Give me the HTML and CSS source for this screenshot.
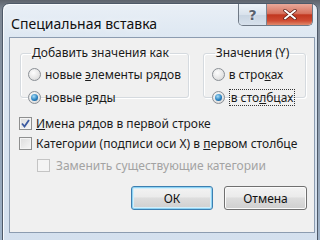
FILE: index.html
```html
<!DOCTYPE html>
<html lang="ru">
<head>
  <meta charset="UTF-8">
  <title>Специальная вставка</title>
  <link rel="stylesheet" href="styles.css">
</head>
<body>
  <div class="window">
    <div class="titlebar">
      <span class="title">Специальная вставка</span>
      <div class="caption-buttons">
        <span class="cap-btn cap-help">?</span>
        <span class="cap-btn cap-close">
          <svg width="14" height="11" viewBox="0 0 14 11">
            <path d="M2 1.5 L12 9.5 M12 1.5 L2 9.5" stroke="#5a1c14" stroke-width="3.4" stroke-linecap="round"/>
            <path d="M2 1.5 L12 9.5 M12 1.5 L2 9.5" stroke="#fff" stroke-width="2" stroke-linecap="round"/>
          </svg>
        </span>
      </div>
    </div>

    <div class="client">
      <div class="groups">
        <fieldset class="group group-add">
          <legend>Добавить значения как</legend>
          <label class="option"><span class="radio"></span><span>новые <u>э</u>лементы рядов</span></label>
          <label class="option"><span class="radio checked"></span><span>новые <u>р</u>яды</span></label>
        </fieldset>
        <fieldset class="group group-values">
          <legend>Значения (Y)</legend>
          <label class="option"><span class="radio"></span><span>в стро<u>к</u>ах</span></label>
          <label class="option"><span class="radio checked"></span><span class="focus">в сто<u>л</u>бцах</span></label>
        </fieldset>
      </div>

      <div class="checks">
        <label class="option"><span class="box checked">
          <svg width="9" height="9" viewBox="0 0 9 9"><path d="M1 4.5 L3.5 7.5 L8 1" fill="none" stroke="#3b5aa0" stroke-width="1.8"/></svg>
        </span><span><u>И</u>мена рядов в первой строке</span></label>
        <label class="option"><span class="box"></span><span>Категории (подписи оси X) в <u>п</u>ервом столбце</span></label>
        <label class="option sub disabled"><span class="box"></span><span>Заменить существующие категории</span></label>
      </div>

      <div class="buttons">
        <button class="btn default">ОК</button>
        <button class="btn">Отмена</button>
      </div>
    </div>
  </div>
</body>
</html>
```

FILE: styles.css
```css
body {
  margin: 0;
  width: 320px;
  height: 240px;
  overflow: hidden;
  background: linear-gradient(#5d636c, #7d8794 10px, #9fb3c9);
  font-family: "Noto Sans", "Open Sans", sans-serif;
  font-size: 12px;
  color: #1b1b1b;
}
.window {
  margin: 3px 2px 0 2px;
  height: 240px;
  border: 1px solid #4e5968;
  border-radius: 7px 7px 0 0;
  background: linear-gradient(#e9eff6, #dbe6f1 40px, #d4e0ee);
  padding: 0 2px 0 6px;
  box-shadow: inset 1px 1px 0 #f8fbfe;
}
.titlebar {
  height: 33px;
  display: flex;
  align-items: flex-start;
  justify-content: space-between;
}
.title {
  margin: 10px 0 0 2px;
  font-size: 14px;
  color: #111;
  text-shadow: 0 0 6px #fff;
}
.caption-buttons {
  display: flex;
  margin: 0 2px 0 0;
  height: 21px;
  border: 1px solid #6f7986;
  border-top: none;
  border-radius: 0 0 5px 5px;
  overflow: hidden;
}
.cap-btn {
  display: flex;
  align-items: center;
  justify-content: center;
  height: 21px;
}
.cap-help {
  width: 27px;
  border-right: 1px solid #7b8491;
  background: linear-gradient(#eef3f8, #d9e2ec 50%, #c8d4e1 51%, #d7e1ec);
  color: #59626e;
  font: bold 14px "DejaVu Sans", sans-serif;
  text-shadow: 0 0 2px #fff;
}
.cap-close {
  width: 45px;
  background: linear-gradient(#e9a99a, #d7735f 45%, #c1371f 52%, #cf4c33 80%, #e08a6d);
}
.client {
  height: 194px;
  border: 1px solid #8c9cb0;
  background: #f0f0f0;
  padding: 0;
}
.groups {
  display: flex;
  gap: 14px;
  padding: 8px 8px 0 10px;
}
.group {
  margin: 0;
  padding: 3px 0 0 7px;
  min-width: 0;
  height: 47px;
  border: 1px solid #d5dadf;
  border-radius: 3px;
  box-shadow: inset 1px 1px 0 #fff, 1px 1px 0 #fff;
}
.group legend {
  margin-left: 3px;
  padding: 0 1px;
  line-height: 14px;
}
.group-add {
  width: 161px;
}
.group-values {
  width: 94px;
  padding-left: 8px;
}
.option {
  display: flex;
  align-items: center;
  gap: 4px;
  height: 23px;
  white-space: nowrap;
}
.radio {
  width: 11px;
  height: 11px;
  border: 1px solid #8a8f95;
  border-radius: 50%;
  background: radial-gradient(circle at 40% 35%, #fdfdfd, #e4e4e4 60%, #cfcfcf);
  flex: none;
  display: flex;
  align-items: center;
  justify-content: center;
}
.radio.checked::after {
  content: "";
  width: 7px;
  height: 7px;
  border-radius: 50%;
  background: radial-gradient(circle at 40% 35%, #a8ddf6, #2b83c1 55%, #10467a);
}
.focus {
  border: 1px dotted #333;
  padding: 0 1px;
  line-height: 15px;
}
.checks {
  padding: 15px 0 0 9px;
}
.checks .option {
  height: 20px;
}
.box {
  width: 11px;
  height: 11px;
  border: 1px solid #8e8f8f;
  background: linear-gradient(135deg, #dcdcdc, #f6f6f6);
  box-shadow: inset 0 0 0 1px #f4f4f4;
  flex: none;
  display: flex;
  align-items: center;
  justify-content: center;
}
.option.sub {
  margin: 2px 0 0 18px;
  gap: 6px;
}
.option.disabled {
  color: #a3a3a3;
}
.disabled .box {
  border-color: #c4c4c4;
  background: #f4f4f4;
}
.buttons {
  display: flex;
  justify-content: flex-end;
  gap: 11px;
  padding: 11px 7px 0 0;
}
.btn {
  width: 83px;
  height: 24px;
  border: 1px solid #707070;
  border-radius: 3px;
  background: linear-gradient(#f3f3f3, #ebebeb 45%, #dddddd 50%, #cfcfcf);
  box-shadow: inset 0 0 0 1px #fbfbfb;
  font-family: inherit;
  font-size: 12px;
  color: #111;
  padding: 0;
}
.btn.default {
  width: 82px;
  border-color: #3c7fb1;
  box-shadow: inset 0 0 0 1px #8fd3f3, inset 0 0 0 2px #d4eefa;
}
```
